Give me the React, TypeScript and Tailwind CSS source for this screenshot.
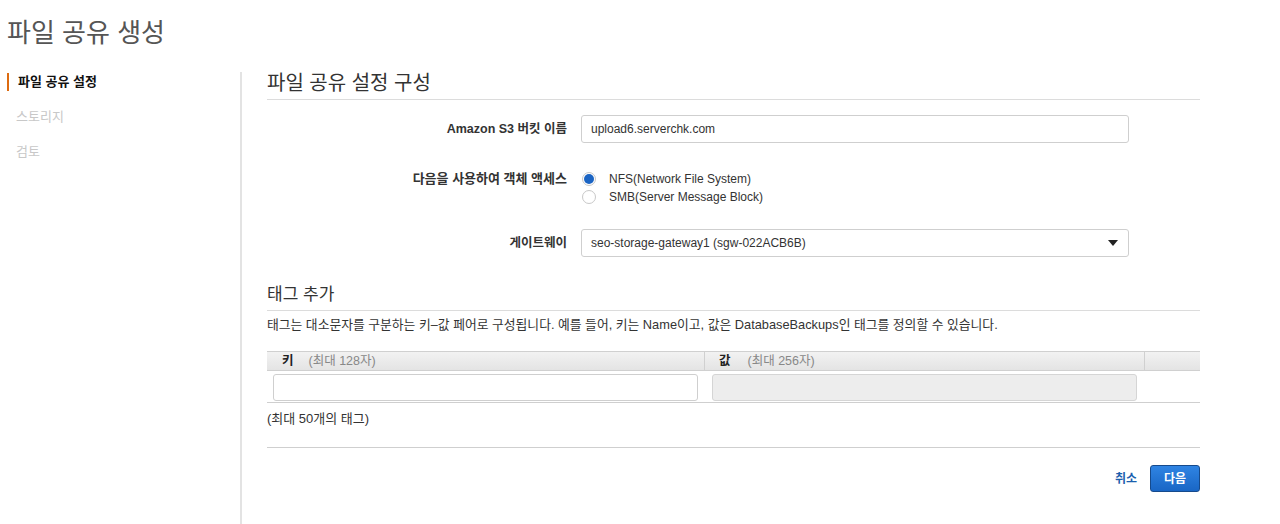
import React from 'react'

const font = { fontFamily: '"Liberation Sans", "Noto Sans CJK KR", sans-serif' }

function Radio({ checked, label }: { checked?: boolean; label: string }) {
    return (
        <label className="flex items-center h-[18px] text-[12px] text-[#333]">
            <span className="w-[14px] h-[14px] rounded-full border border-[#c8c8c8] bg-white flex items-center justify-center ml-[1px]">
                {checked && <span className="w-[10px] h-[10px] rounded-full bg-[#1b64c3]"></span>}
            </span>
            <span className="ml-[13px]">{label}</span>
        </label>
    )
}

function FormRow({ label, size, children, align = 'center' }: { label: string; size: string; children: React.ReactNode; align?: 'center' | 'start' }) {
    return (
        <div className={`flex ${align === 'center' ? 'items-center' : 'items-start'}`}>
            <div className={`w-[300px] text-right text-[#333] font-bold leading-[18px] ${size}`}>{label}</div>
            <div className="ml-[14px] w-[548px]">{children}</div>
        </div>
    )
}

export default function App() {
    return (
        <div style={font} className="w-[1280px] h-[524px] bg-white overflow-hidden">
            {/* Page title */}
            <h1 className="pl-[7px] pt-[16px] h-[70px] text-[26px] leading-[34px] text-[#555] font-normal">
                파일 공유 생성
            </h1>

            <div className="flex h-[454px]">
                {/* Wizard steps */}
                <div className="w-[242px] pl-[7px] pt-[1px] border-r-2 border-[#e3e3e3] mt-[2px]">
                    <div className="flex items-center h-[18px] border-l-[2px] border-[#dd6b10] pl-[9px] text-[13px] font-bold text-[#111]">
                        파일 공유 설정
                    </div>
                    <div className="mt-[17px] pl-[9px] h-[18px] flex items-center text-[13px] text-[#c8c8c8]">스토리지</div>
                    <div className="mt-[17px] pl-[9px] h-[18px] flex items-center text-[13px] text-[#c8c8c8]">검토</div>
                </div>

                {/* Form */}
                <div className="ml-[25px] w-[933px]">
                    <h2 className="h-[30px] border-b border-[#dcdcdc] text-[20px] leading-[26px] text-[#333]">
                        파일 공유 설정 구성
                    </h2>

                    <div className="mt-[15px]">
                        <FormRow label="Amazon S3 버킷 이름" size="text-[12.5px]">
                            <div className="h-[28px] border border-[#cfcfcf] rounded-[3px] px-[9px] flex items-center text-[12px] text-[#333]">
                                upload6.serverchk.com
                            </div>
                        </FormRow>
                    </div>

                    <div className="mt-[27px]">
                        <FormRow label="다음을 사용하여 객체 액세스" size="text-[13px]" align="start">
                            <Radio checked label="NFS(Network File System)" />
                            <Radio label="SMB(Server Message Block)" />
                        </FormRow>
                    </div>

                    <div className="mt-[23px]">
                        <FormRow label="게이트웨이" size="text-[12.5px]">
                            <div className="h-[28px] border border-[#cfcfcf] rounded-[3px] pl-[9px] pr-[10px] flex items-center justify-between text-[12px] text-[#333]">
                                <span>seo-storage-gateway1 (sgw-022ACB6B)</span>
                                <span className="w-0 h-0 border-l-[5px] border-r-[5px] border-t-[6px] border-l-transparent border-r-transparent border-t-[#222]"></span>
                            </div>
                        </FormRow>
                    </div>

                    {/* Tags */}
                    <h3 className="mt-[27px] h-[27px] border-b border-[#dcdcdc] text-[17px] leading-[22px] text-[#333]">
                        태그 추가
                    </h3>
                    <p className="mt-[5px] text-[12.8px] leading-[18px] text-[#333]">
                        태그는 대소문자를 구분하는 키–값 페어로 구성됩니다. 예를 들어, 키는 Name이고, 값은 DatabaseBackups인 태그를 정의할 수 있습니다.
                    </p>

                    <div className="mt-[17px] border-b border-[#cfcfcf]">
                        <div className="flex h-[20px] border-t border-b border-[#d0d0d0] bg-gradient-to-b from-[#f2f2f2] to-[#e4e4e4] text-[12.5px]">
                            <div className="w-[438px] pl-[15px] flex items-center border-r border-[#d0d0d0]">
                                <span className="font-bold text-[#222]">키</span>
                                <span className="ml-[15px] text-[#888]">(최대 128자)</span>
                            </div>
                            <div className="w-[440px] pl-[14px] flex items-center border-r border-[#d0d0d0]">
                                <span className="font-bold text-[#222]">값</span>
                                <span className="ml-[17px] text-[#888]">(최대 256자)</span>
                            </div>
                            <div className="flex-1"></div>
                        </div>
                        <div className="flex h-[31px] pt-[3px]">
                            <div className="w-[438px] pl-[6px] pr-[7px]">
                                <div className="h-[27px] border border-[#cfcfcf] rounded-[3px] bg-white"></div>
                            </div>
                            <div className="w-[440px] pl-[7px] pr-[8px]">
                                <div className="h-[27px] border border-[#d5d5d5] rounded-[3px] bg-[#ededed]"></div>
                            </div>
                        </div>
                    </div>

                    <p className="mt-[7px] h-[18px] text-[13px] leading-[18px] text-[#333]">(최대 50개의 태그)</p>

                    <div className="mt-[19px] border-t border-[#cfcfcf]"></div>

                    {/* Actions */}
                    <div className="mt-[17px] flex items-center justify-end">
                        <button className="text-[12px] font-bold text-[#1b5fae] mr-[13px]">취소</button>
                        <button className="h-[27px] w-[50px] rounded-[3px] border border-[#164a8c] bg-gradient-to-b from-[#2f84e3] to-[#1966c5] text-[12px] font-bold text-white">
                            다음
                        </button>
                    </div>
                </div>
            </div>
        </div>
    )
}
